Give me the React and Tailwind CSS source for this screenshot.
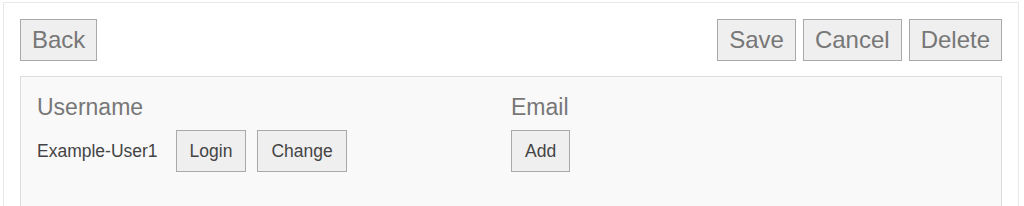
export default function App() {
  const font = { fontFamily: '"Liberation Sans", Arial, sans-serif' };
  const bigBtn =
    "border border-[#a9a9a9] bg-[#efefef] text-[#777] text-[24px] leading-7 py-[6px] px-[11px]";
  const smallBtn =
    "border border-[#a9a9a9] bg-[#efefef] text-[#444] text-[17.5px] leading-6 py-2 px-[13px]";
  return (
    <div className="bg-white w-[1024px] h-[206px] overflow-hidden" style={font}>
      <div className="ml-[3px] mt-[2px] w-[1016px] h-[220px] border border-[#e8e8e8] px-4 pt-4">
        <div className="flex justify-between items-start">
          <button className={bigBtn}>Back</button>
          <div className="flex gap-[7px]">
            <button className={bigBtn}>Save</button>
            <button className={bigBtn}>Cancel</button>
            <button className={bigBtn}>Delete</button>
          </div>
        </div>
        <div className="mt-[15px] border border-[#dcdcdc] bg-[#f9f9f9] p-4 h-[200px]">
          <div className="grid grid-cols-2">
            <div>
              <div className="text-[23px] leading-7 text-[#777] mb-[9px]">Username</div>
              <div className="flex items-center">
                <span className="text-[17.5px] text-[#444] mr-[18px]">Example-User1</span>
                <button className={smallBtn}>Login</button>
                <button className={smallBtn + " ml-[11px]"}>Change</button>
              </div>
            </div>
            <div>
              <div className="text-[23px] leading-7 text-[#777] mb-[9px]">Email</div>
              <div className="flex items-center">
                <button className={smallBtn}>Add</button>
              </div>
            </div>
          </div>
        </div>
      </div>
    </div>
  );
}
